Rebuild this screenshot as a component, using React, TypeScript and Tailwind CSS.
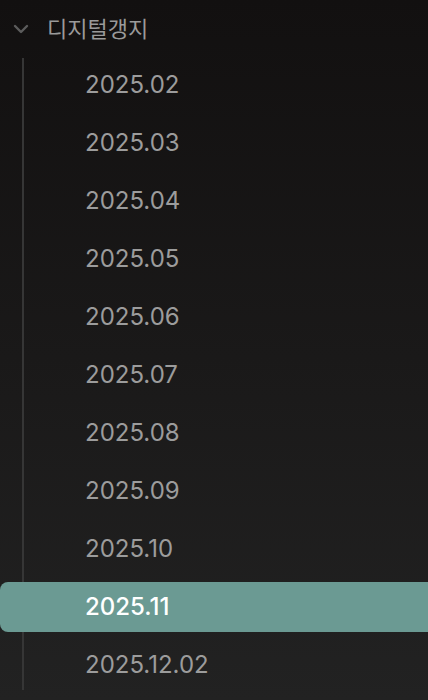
const items = [
    '2025.02',
    '2025.03',
    '2025.04',
    '2025.05',
    '2025.06',
    '2025.07',
    '2025.08',
    '2025.09',
    '2025.10',
    '2025.11',
    '2025.12.02',
];

const active = '2025.11';

export default function App() {
    return (
        <div
            className="w-[428px] h-[700px] overflow-hidden bg-gradient-to-b from-[#121010] to-[#222222]"
            style={{ fontFamily: 'Inter, "Noto Sans CJK KR", sans-serif' }}
        >
            <div className="flex items-center h-[56px] pl-[13px] pt-[2px]">
                <svg
                    width="16"
                    height="10"
                    viewBox="0 0 16 10"
                    fill="none"
                    stroke="#5c5c5c"
                    strokeWidth="2.4"
                    strokeLinecap="round"
                    strokeLinejoin="round"
                >
                    <path d="M2 2l6 6 6-6" />
                </svg>
                <span className="ml-[18px] text-[22px] text-[#9a9a9a]">디지털갱지</span>
            </div>

            <div className="relative">
                {/* guide line */}
                <div className="absolute left-[22px] top-[2px] bottom-[4px] w-[2px] bg-[#363636]" />
                {items.map((item) => {
                    const isActive = item === active;
                    return (
                        <div key={item} className="relative py-[4px]">
                            <div
                                className={`h-[50px] flex items-center pl-[85px] rounded-l-[8px] text-[24px] ${
                                    isActive ? 'bg-[#6b9a93] text-white font-medium' : 'text-[#9c9c9c]'
                                }`}
                            >
                                {item}
                            </div>
                        </div>
                    );
                })}
            </div>
        </div>
    );
}
